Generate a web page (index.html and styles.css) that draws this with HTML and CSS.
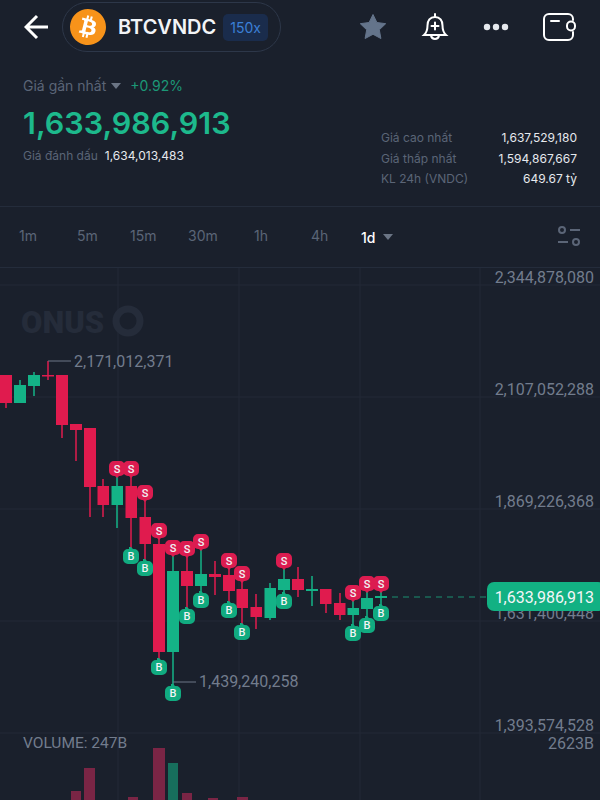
FILE: index.html
```html
<!DOCTYPE html>
<html lang="en">
<head>
<meta charset="UTF-8">
<meta name="viewport" content="width=device-width, initial-scale=1.0">
<title>BTCVNDC</title>
<link rel="stylesheet" href="styles.css">
</head>
<body>
  <div class="screen">
    <header class="topbar">
      <svg class="back" width="26" height="26" viewBox="0 0 26 26"><path d="M24 13H2M13 2 2 13l11 11"/></svg>
      <div class="pair">
        <svg class="coin" width="36" height="36" viewBox="0 0 24 24">
          <circle cx="12" cy="12" r="10" fill="#fff"/>
          <path fill="#f7931a" d="M23.638 14.904c-1.602 6.43-8.113 10.34-14.542 8.736C2.67 22.05-1.244 15.525.362 9.105 1.962 2.67 8.475-1.243 14.9.358c6.43 1.605 10.342 8.115 8.738 14.548v-.002zm-6.35-4.613c.24-1.59-.974-2.45-2.64-3.03l.54-2.153-1.315-.33-.525 2.107c-.345-.087-.705-.167-1.064-.25l.526-2.127-1.32-.33-.54 2.165c-.285-.067-.565-.132-.84-.2l-1.815-.45-.35 1.407s.975.225.955.236c.535.136.63.486.615.766l-1.477 5.92c-.075.166-.24.406-.614.314.015.02-.96-.24-.96-.24l-.66 1.51 1.71.426.93.242-.54 2.19 1.32.327.54-2.17c.36.1.705.19 1.05.273l-.51 2.154 1.32.33.545-2.19c2.24.427 3.93.257 4.64-1.774.57-1.637-.03-2.58-1.217-3.196.854-.193 1.5-.76 1.68-1.93h.01zm-3.01 4.22c-.404 1.64-3.157.75-4.05.53l.72-2.9c.896.23 3.757.67 3.33 2.37zm.41-4.24c-.37 1.49-2.662.735-3.405.55l.654-2.64c.744.18 3.137.524 2.75 2.084v.006z"/>
        </svg>
        <span class="pair-name">BTCVNDC</span>
        <span class="leverage">150x</span>
      </div>
      <div class="actions">
        <svg width="30" height="30" viewBox="0 0 30 30"><path class="star" d="M15 2.5l3.9 8 8.8 1.2-6.4 6.1 1.6 8.7-7.9-4.2-7.9 4.2 1.6-8.7-6.4-6.1 8.8-1.2z"/></svg>
        <svg class="line-icon" width="28" height="30" viewBox="0 0 28 30">
          <path d="M14 5c-5 0-7.500 3.800-7.500 8.500 0 4.500-.8 7-3.500 9.500h22c-2.700-2.500-3.500-5-3.500-9.500C21.500 8.800 19 5 14 5z"/>
          <path d="M14 2v3M10 23.500c.5 2.500 2 3.500 4 3.500s3.500-1 4-3.500M14 10.500v7M10.500 14h7"/>
        </svg>
        <svg width="26" height="8" viewBox="0 0 26 8"><circle class="dot" cx="4" cy="4" r="3.200"/><circle class="dot" cx="13" cy="4" r="3.200"/><circle class="dot" cx="22" cy="4" r="3.200"/></svg>
        <svg class="line-icon" width="34" height="30" viewBox="0 0 34 30">
          <path d="M31 8V7a5 5 0 0 0-5-5H7a5 5 0 0 0-5 5v16a5 5 0 0 0 5 5h19a5 5 0 0 0 5-5v-3"/>
          <rect x="25" y="9.500" width="8" height="9" rx="4"/>
          <path d="M9 9h8"/>
        </svg>
      </div>
    </header>

    <section class="summary">
      <div class="last-price">
        <div class="last-head">
          <span class="muted">Giá gần nhất</span>
          <span class="caret"></span>
          <span class="change">+0.92%</span>
        </div>
        <div class="price">1,633,986,913</div>
        <div class="mark">
          <span class="muted">Giá đánh dấu</span>
          <span>1,634,013,483</span>
        </div>
      </div>
      <div class="stats">
        <span class="muted">Giá cao nhất</span><span>1,637,529,180</span>
        <span class="muted">Giá thấp nhất</span><span>1,594,867,667</span>
        <span class="muted">KL 24h (VNDC)</span><span>649.67 tỷ</span>
      </div>
    </section>

    <nav class="tabs">
      <span class="tab t1">1m</span>
      <span class="tab t2">5m</span>
      <span class="tab t3">15m</span>
      <span class="tab t4">30m</span>
      <span class="tab t5">1h</span>
      <span class="tab t6">4h</span>
      <span class="active">1d</span>
      <span class="caret"></span>
      <svg class="settings" width="24" height="22" viewBox="0 0 24 22">
        <circle cx="5" cy="4" r="3"/><path d="M13 4h10M1 16h10"/><circle cx="19" cy="16" r="3"/>
      </svg>
    </nav>

    <svg class="chart" width="600" height="532" viewBox="0 268 600 532">
      <defs>
        <g id="sell">
          <path class="sell-bg" d="M-3-8H3A5 5 0 0 1 8-3V2A5 5 0 0 1 3 7H2L0 9-2 7H-3A5 5 0 0 1-8 2V-3A5 5 0 0 1-3-8Z"/>
          <text class="badge-text" y="3.500">S</text>
        </g>
        <g id="buy">
          <path class="buy-bg" d="M-2-9 0-9 2-7H3A5 5 0 0 1 8-2V3A5 5 0 0 1 3 8H-3A5 5 0 0 1-8 3V-2A5 5 0 0 1-3-7H-2Z"/>
          <text class="badge-text" y="4">B</text>
        </g>
      </defs>

      <!-- grid -->
      <path class="grid" d="M118 268V800M239 268V800M360 268V800M480 268V800M0 285H600M0 397H600M0 509H600M0 621H600M0 733H600"/>

      <!-- watermark -->
      <text class="watermark" x="21" y="333">ONUS</text>
      <circle class="watermark-ring" cx="128" cy="321" r="12"/>

      <!-- volume -->
      <g class="vol-red">
        <rect x="71" y="791" width="10" height="9"/>
        <rect x="84" y="768" width="11" height="32"/>
        <rect x="128" y="797" width="10" height="3"/>
        <rect x="153" y="748" width="12" height="52"/>
        <rect x="182" y="793" width="10" height="7"/>
        <rect x="208" y="798" width="10" height="2"/>
        <rect x="237" y="797" width="11" height="3"/>
      </g>
      <rect class="vol-green" x="168" y="763" width="10" height="37"/>

      <!-- wicks -->
      <path class="wick-red" d="M6 375V408M48 361V380M62 375V438M76 424V461M90 428V517M103 479V517M131 476V550M145 500V560M159 538V660M187 556V609M215 561V595M229 568V603M242 581V625M256 594V629M298 567V597M326 589V613M340 593V620"/>
      <path class="wick-green" d="M20 380V403M34 372V396M117 476V528M173 555V686M201 549V593M270 583V620M284 568V594M312 576V606M353 600V626M367 591V618M381 591V606"/>

      <!-- bodies -->
      <g class="red">
        <rect x="0" y="375" width="12" height="28"/>
        <rect x="42" y="375" width="12" height="1.500"/>
        <rect x="56" y="375" width="12" height="50"/>
        <rect x="70" y="424" width="12" height="6"/>
        <rect x="84" y="428" width="12" height="59"/>
        <rect x="97.500" y="486" width="11.500" height="19"/>
        <rect x="125.500" y="486" width="11.500" height="32"/>
        <rect x="139.500" y="517" width="11.500" height="27"/>
        <rect x="153" y="544" width="12" height="108"/>
        <rect x="181" y="571" width="12" height="15"/>
        <rect x="209" y="574" width="12" height="3"/>
        <rect x="223" y="575" width="12" height="16"/>
        <rect x="236.500" y="589" width="11.500" height="19"/>
        <rect x="250.500" y="607" width="11.500" height="10"/>
        <rect x="292" y="579" width="12" height="11"/>
        <rect x="320" y="589" width="11.500" height="15"/>
        <rect x="334" y="603" width="11.500" height="12"/>
      </g>
      <g class="green">
        <rect x="14" y="385" width="12" height="18"/>
        <rect x="28" y="375" width="12" height="11"/>
        <rect x="111.500" y="486" width="11.500" height="19"/>
        <rect x="167" y="571" width="12" height="81"/>
        <rect x="195" y="574" width="12" height="12"/>
        <rect x="264.500" y="588" width="11.500" height="30"/>
        <rect x="278" y="579" width="12" height="11"/>
        <rect x="306" y="589" width="12" height="2"/>
        <rect x="347.500" y="608" width="11.500" height="7"/>
        <rect x="361" y="598" width="12" height="11"/>
        <rect x="375" y="596" width="12" height="2"/>
      </g>

      <!-- trade markers -->
      <use href="#sell" x="117" y="469"/>
      <use href="#sell" x="131" y="469"/>
      <use href="#sell" x="145" y="493"/>
      <use href="#sell" x="159" y="531"/>
      <use href="#sell" x="173" y="548"/>
      <use href="#sell" x="187" y="549"/>
      <use href="#sell" x="201" y="542"/>
      <use href="#sell" x="229" y="561"/>
      <use href="#sell" x="242" y="574"/>
      <use href="#sell" x="284" y="561"/>
      <use href="#sell" x="353" y="593"/>
      <use href="#sell" x="367" y="584"/>
      <use href="#sell" x="381" y="584"/>
      <use href="#buy" x="131" y="556"/>
      <use href="#buy" x="145" y="568"/>
      <use href="#buy" x="159" y="667"/>
      <use href="#buy" x="173" y="693"/>
      <use href="#buy" x="187" y="616"/>
      <use href="#buy" x="201" y="600"/>
      <use href="#buy" x="229" y="610"/>
      <use href="#buy" x="242" y="632"/>
      <use href="#buy" x="284" y="601"/>
      <use href="#buy" x="353" y="633"/>
      <use href="#buy" x="367" y="625"/>
      <use href="#buy" x="381" y="613"/>

      <!-- high / low notes -->
      <path class="note-line" d="M48 361H71M173 682H196"/>
      <text class="axis-text" x="74" y="367">2,171,012,371</text>
      <text class="axis-text" x="199" y="687">1,439,240,258</text>

      <!-- axis -->
      <g class="axis-right">
        <text class="axis-text" x="594" y="283">2,344,878,080</text>
        <text class="axis-text" x="594" y="395">2,107,052,288</text>
        <text class="axis-text" x="594" y="507">1,869,226,368</text>
        <text class="axis-text" x="594" y="619">1,631,400,448</text>
        <text class="axis-text" x="594" y="731">1,393,574,528</text>
        <text class="axis-text" x="594" y="749">2623B</text>
      </g>
      <text class="volume-text" x="23" y="748">VOLUME: 247B</text>

      <!-- last price -->
      <path class="last-line" d="M392 597H487"/>
      <rect class="last-tag" x="487" y="582" width="118" height="29" rx="7"/>
      <text class="last-text" x="594" y="603">1,633,986,913</text>
    </svg>
  </div>
</body>
</html>
```

FILE: styles.css
```css
body {
  margin: 0;
  background-color: #1a202c;
  font-family: Inter, "Noto Sans", sans-serif;
  color: #e6e9ee;
}
svg {
  display: block;
}
.screen {
  width: 600px;
  height: 800px;
  overflow: hidden;
}
.muted {
  color: #5b6577;
}
.caret {
  display: inline-block;
  width: 0;
  height: 0;
  border-left: 5px solid transparent;
  border-right: 5px solid transparent;
  border-top: 6px solid #6b7585;
}

/* top bar */
.topbar {
  display: flex;
  align-items: center;
  height: 50px;
  padding: 2px 24px 0 24px;
}
.back path {
  fill: none;
  stroke: #ffffff;
  stroke-width: 3;
}
.pair {
  display: flex;
  align-items: center;
  box-sizing: border-box;
  width: 219px;
  height: 50px;
  margin-left: 12px;
  padding-left: 7px;
  border: 1.5px solid #2d3749;
  border-radius: 25px;
}
.pair-name {
  margin-left: 12px;
  font-size: 20px;
  font-weight: 600;
  color: #f2f4f7;
}
.leverage {
  margin-left: 7px;
  padding: 5px 7px;
  border-radius: 5px;
  background-color: #1a2c4c;
  color: #3b7fd6;
  font-size: 14px;
}
.actions {
  display: flex;
  align-items: center;
  justify-content: space-between;
  flex: 1;
  margin-left: 77px;
}
.star {
  fill: #64748b;
  stroke: #64748b;
  stroke-linejoin: round;
}
.line-icon path,
.line-icon rect {
  fill: none;
  stroke: #ffffff;
  stroke-width: 2;
  stroke-linecap: round;
}
.line-icon rect {
  fill: #1a202c;
}
.dot {
  fill: #e6e9ee;
}

/* price summary */
.summary {
  display: flex;
  justify-content: space-between;
  height: 155px;
  padding: 0 23px;
  border-bottom: 1.5px solid #242c3b;
  box-sizing: border-box;
}
.last-price {
  padding-top: 25px;
}
.last-head {
  display: flex;
  align-items: center;
  font-size: 14px;
}
.last-head .caret {
  margin: 0 9px 0 5px;
}
.change {
  color: #1c9877;
}
.price {
  margin-top: 10px;
  font-size: 30.500px;
  font-weight: 600;
  color: #1db98c;
}
.mark {
  display: flex;
  gap: 7px;
  margin-top: 7px;
  font-size: 12px;
}
.stats {
  display: grid;
  grid-template-columns: 1fr auto;
  align-content: start;
  row-gap: 5.500px;
  width: 196px;
  padding-top: 78px;
  font-size: 12px;
  line-height: 15px;
  text-align: right;
  white-space: nowrap;
}
.stats .muted {
  text-align: left;
}

/* intervals */
.tabs {
  display: flex;
  align-items: center;
  height: 61px;
  padding: 0 19px;
  border-bottom: 1.5px solid #242c3b;
  box-sizing: border-box;
  font-size: 14px;
  color: #5b6577;
}
.tab {
  width: 58px;
  margin-bottom: 4px;
}
.t2 {
  width: 53px;
}
.t3 {
  width: 58px;
}
.t4 {
  width: 66px;
}
.t5 {
  width: 57px;
}
.t6 {
  width: 50px;
}
.active {
  width: 22px;
  color: #ffffff;
  font-weight: 500;
}
.settings {
  margin-left: auto;
}
.settings circle,
.settings path {
  fill: none;
  stroke: #5b6577;
  stroke-width: 2;
}

/* chart */
.grid {
  fill: none;
  stroke: #222937;
  stroke-width: 1;
}
.watermark {
  fill: #252c3a;
  font-family: Roboto, sans-serif;
  font-size: 31px;
  font-weight: 900;
}
.watermark-ring {
  fill: none;
  stroke: #252c3a;
  stroke-width: 7;
}
.vol-red {
  fill: #7a2545;
}
.vol-green {
  fill: #176e5c;
}
.red {
  fill: #e01b4e;
}
.green {
  fill: #14b387;
}
.wick-red,
.wick-green {
  fill: none;
  stroke-width: 1.500;
}
.wick-red {
  stroke: #e01b4e;
}
.wick-green {
  stroke: #14b387;
}
.sell-bg {
  fill: #dc1c50;
}
.buy-bg {
  fill: #11ab80;
}
.badge-text {
  fill: #f1f3f5;
  font-family: Roboto, sans-serif;
  font-size: 11px;
  font-weight: 500;
  text-anchor: middle;
}
.note-line {
  fill: none;
  stroke: #6d7787;
  stroke-width: 1;
}
.axis-text,
.volume-text {
  fill: #727c8d;
  font-family: Roboto, sans-serif;
  font-size: 16px;
}
.volume-text {
  font-size: 15.500px;
}
.axis-right text {
  text-anchor: end;
}
.last-line {
  fill: none;
  stroke: #1a8f70;
  stroke-width: 1;
  stroke-dasharray: 6 5;
}
.last-tag {
  fill: #12b183;
}
.last-text {
  fill: #f4f6f8;
  font-family: Roboto, sans-serif;
  font-size: 16px;
  text-anchor: end;
}
```
